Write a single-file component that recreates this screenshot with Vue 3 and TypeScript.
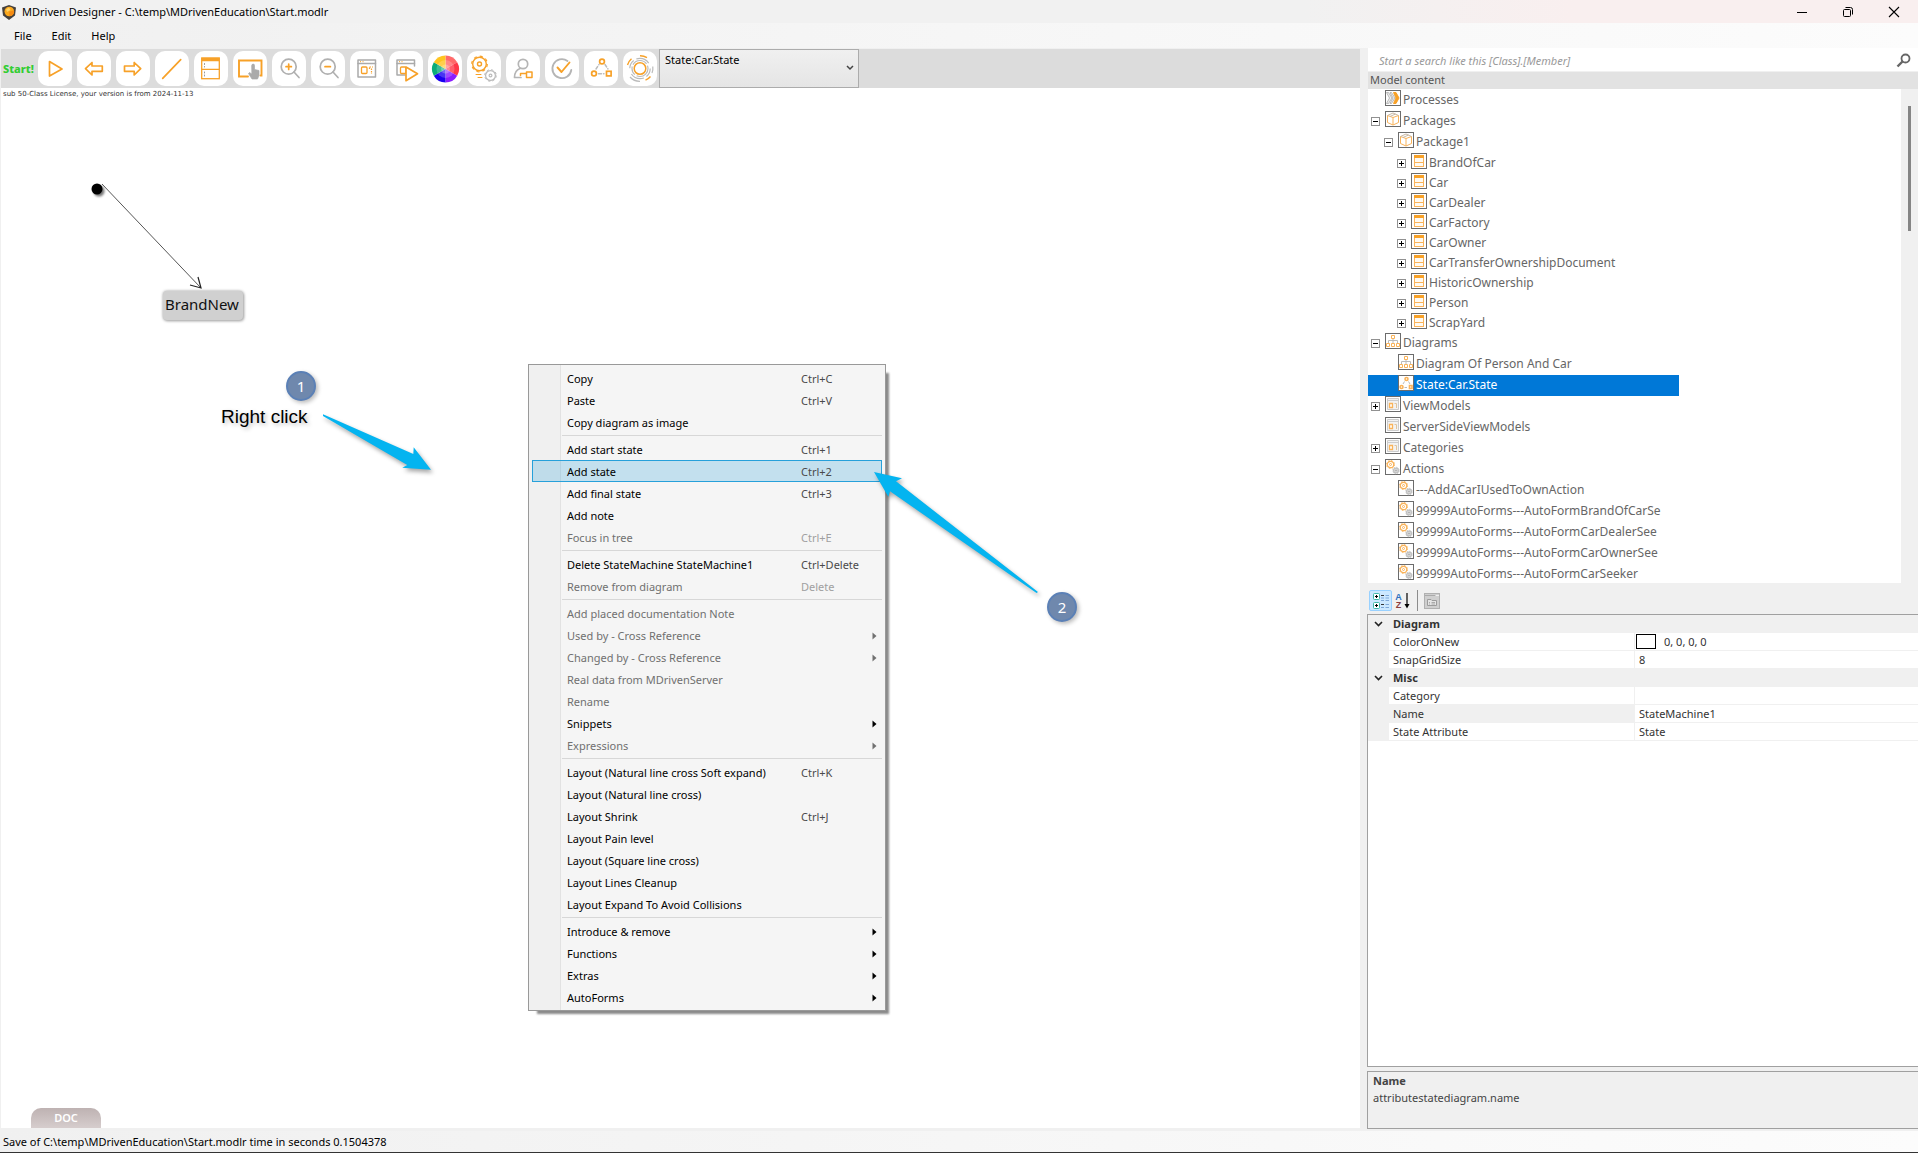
<script setup lang="ts">
import { ref } from 'vue'

interface TreeRow {
  label: string
  level: number
  icon: string
  expander?: '+' | '-'
  compact?: boolean
  selected?: boolean
}

interface MenuEntry {
  label?: string
  keys?: string
  disabled?: boolean
  submenu?: boolean
  active?: boolean
  separator?: boolean
}

interface PropertyRow {
  name: string
  value: string
  swatch?: boolean
  current?: boolean
}

interface PropertyGroup {
  title: string
  rows: PropertyRow[]
}

const search = ref('')
const diagram = ref('State:Car.State')

const tools: string[] = [
  'run', 'back', 'forward', 'line', 'class', 'place', 'zoomin', 'zoomout',
  'view', 'viewrun', 'colors', 'actions', 'access', 'check', 'states', 'rings',
]

const classNames: string[] = [
  'BrandOfCar', 'Car', 'CarDealer', 'CarFactory', 'CarOwner',
  'CarTransferOwnershipDocument', 'HistoricOwnership', 'Person', 'ScrapYard',
]

const tree: TreeRow[] = [
  { label: 'Processes', level: 0, icon: 'process' },
  { label: 'Packages', level: 0, icon: 'package', expander: '-' },
  { label: 'Package1', level: 1, icon: 'package', expander: '-' },
  ...classNames.map((label): TreeRow => ({ label, level: 2, icon: 'class', expander: '+', compact: true })),
  { label: 'Diagrams', level: 0, icon: 'diagram', expander: '-' },
  { label: 'Diagram Of Person And Car', level: 1, icon: 'diagram' },
  { label: 'State:Car.State', level: 1, icon: 'state', selected: true },
  { label: 'ViewModels', level: 0, icon: 'view', expander: '+' },
  { label: 'ServerSideViewModels', level: 0, icon: 'view' },
  { label: 'Categories', level: 0, icon: 'view', expander: '+' },
  { label: 'Actions', level: 0, icon: 'action', expander: '-' },
  { label: '---AddACarIUsedToOwnAction', level: 1, icon: 'action' },
  { label: '99999AutoForms---AutoFormBrandOfCarSe', level: 1, icon: 'action' },
  { label: '99999AutoForms---AutoFormCarDealerSee', level: 1, icon: 'action' },
  { label: '99999AutoForms---AutoFormCarOwnerSee', level: 1, icon: 'action' },
  { label: '99999AutoForms---AutoFormCarSeeker', level: 1, icon: 'action' },
]

const menu: MenuEntry[] = [
  { label: 'Copy', keys: 'Ctrl+C' },
  { label: 'Paste', keys: 'Ctrl+V' },
  { label: 'Copy diagram as image' },
  { separator: true },
  { label: 'Add start state', keys: 'Ctrl+1' },
  { label: 'Add state', keys: 'Ctrl+2', active: true },
  { label: 'Add final state', keys: 'Ctrl+3' },
  { label: 'Add note' },
  { label: 'Focus in tree', keys: 'Ctrl+E', disabled: true },
  { separator: true },
  { label: 'Delete StateMachine StateMachine1', keys: 'Ctrl+Delete' },
  { label: 'Remove from diagram', keys: 'Delete', disabled: true },
  { separator: true },
  { label: 'Add placed documentation Note', disabled: true },
  { label: 'Used by - Cross Reference', disabled: true, submenu: true },
  { label: 'Changed by - Cross Reference', disabled: true, submenu: true },
  { label: 'Real data from MDrivenServer', disabled: true },
  { label: 'Rename', disabled: true },
  { label: 'Snippets', submenu: true },
  { label: 'Expressions', disabled: true, submenu: true },
  { separator: true },
  { label: 'Layout (Natural line cross Soft expand)', keys: 'Ctrl+K' },
  { label: 'Layout (Natural line cross)' },
  { label: 'Layout Shrink', keys: 'Ctrl+J' },
  { label: 'Layout Pain level' },
  { label: 'Layout (Square line cross)' },
  { label: 'Layout Lines Cleanup' },
  { label: 'Layout Expand To Avoid Collisions' },
  { separator: true },
  { label: 'Introduce & remove', submenu: true },
  { label: 'Functions', submenu: true },
  { label: 'Extras', submenu: true },
  { label: 'AutoForms', submenu: true },
]

const groups: PropertyGroup[] = [
  {
    title: 'Diagram',
    rows: [
      { name: 'ColorOnNew', value: '0, 0, 0, 0', swatch: true },
      { name: 'SnapGridSize', value: '8' },
    ],
  },
  {
    title: 'Misc',
    rows: [
      { name: 'Category', value: '' },
      { name: 'Name', value: 'StateMachine1', current: true },
      { name: 'State Attribute', value: 'State' },
    ],
  },
]
</script>

<template>
  <div class="window">
    <header class="titlebar">
      <svg class="logo" width="16" height="16" viewBox="0 0 16 16" aria-hidden="true">
        <path d="M1 3.500 8 1 15 3.500 14 11.500 8 16 2 11.500Z" fill="#45403c" />
        <circle cx="8.300" cy="7.500" r="4.800" fill="#fba81c" />
        <path d="M8.300 7.500 13 6.500A4.800 4.800 0 0 1 8.300 12.300Z" fill="#f58a12" />
        <path d="M5 5.500 8 3.500 9.500 6 6 8Z" fill="#ffd264" />
      </svg>
      <h1 class="title">MDriven Designer - C:\temp\MDrivenEducation\Start.modlr</h1>
      <div class="caption">
        <button type="button" aria-label="Minimize">
          <svg width="12" height="12" viewBox="0 0 12 12"><path d="M1 6.500H11" stroke="#000" /></svg>
        </button>
        <button type="button" aria-label="Restore">
          <svg width="12" height="12" viewBox="0 0 12 12" fill="none" stroke="#000">
            <rect x="1.500" y="3.500" width="7" height="7" rx="1" />
            <path d="M3.500 1.500H8.500Q10.500 1.500 10.500 3.500V8.500" />
          </svg>
        </button>
        <button type="button" aria-label="Close">
          <svg width="12" height="12" viewBox="0 0 12 12"><path d="M1 1 11 11M11 1 1 11" stroke="#000" stroke-width="1.100" /></svg>
        </button>
      </div>
    </header>

    <nav class="menubar">
      <button type="button">File</button>
      <button type="button">Edit</button>
      <button type="button">Help</button>
    </nav>

    <div class="body">
      <main class="work">
        <div class="toolbar">
          <button type="button" class="start">Start!</button>
          <button v-for="t in tools" :key="t" type="button" class="tool" :aria-label="t">
            <svg width="34" height="35" viewBox="0 0 34 35" fill="none" stroke="#f7a128" stroke-width="1.700" stroke-linejoin="round" stroke-linecap="round">
              <path v-if="t === 'run'" d="M11.500 10.500 24 18 11.500 25Z" />
              <path v-else-if="t === 'back'" d="M8.500 17.700 15 11.500V15H25.300V20.300H15V24Z" />
              <path v-else-if="t === 'forward'" d="M24.700 17.700 18.200 11.500V15H8.500V20.300H18.200V24Z" />
              <path v-else-if="t === 'line'" d="M7.700 27.300 25.700 8.700" />
              <g v-else-if="t === 'class'">
                <rect x="7.700" y="7" width="17.600" height="20.700" stroke-linejoin="miter" stroke-width="1.300" />
                <path d="M7.700 8.500H25.300" stroke-width="3.500" stroke-linecap="butt" />
                <path d="M7.700 18.300H25.300" stroke-width="1.300" />
                <path d="M10.500 12.500V16M10.500 21V25" stroke="#999" stroke-width="1" stroke-dasharray="1 2" />
              </g>
              <g v-else-if="t === 'place'">
                <path d="M15 25.500H6V9.500H28.500V24.500H27.500" stroke-linejoin="miter" stroke-width="1.900" />
                <path d="M18.700 14.500a1.400 1.400 0 0 1 2.800 0V18.500L26 19.500V24.500L24.500 28H19L15.500 22.500 16.500 21.500 18.700 23Z" fill="#aaa" stroke="#aaa" stroke-width="0.700" />
              </g>
              <g v-else-if="t === 'zoomin' || t === 'zoomout'">
                <circle cx="16.700" cy="15.700" r="7.500" stroke="#b0b0b0" />
                <path d="M22 21 27 26.500" stroke="#b0b0b0" />
                <path :d="t === 'zoomin' ? 'M14 15.700H19.400M16.700 13V18.400' : 'M14 15.700H19.400'" />
              </g>
              <g v-else-if="t === 'view' || t === 'viewrun'">
                <path :d="t === 'view' ? 'M8 9H25.500V26H8Z' : 'M16 24H8V9H25.500V15'" stroke="#aaa" stroke-width="1.500" />
                <path d="M8 12.500H25.500" stroke="#aaa" stroke-width="1.500" />
                <path d="M10 10.700H15" stroke-width="1" stroke-dasharray="1 1.500" stroke-linecap="butt" />
                <rect x="11.500" y="16" width="5.500" height="6.500" rx="1" stroke-width="1.300" />
                <path v-if="t === 'view'" d="M19.500 16H23M19.500 16.500V18M21.500 17.500V23" stroke-width="1.200" stroke-dasharray="1.500 1" stroke-linecap="butt" />
                <path v-else d="M17 16 28.500 22.700 17 29.700Z" fill="#fff" />
              </g>
              <g v-else-if="t === 'colors'" stroke="none">
                <path d="M17.500 18V4.500A13.500 13.500 0 0 1 29.200 11.200Z" fill="#ff6a6a" />
                <path d="M17.500 18 29.200 11.200A13.500 13.500 0 0 1 29.200 24.700Z" fill="#ff3848" />
                <path d="M17.500 18 29.200 24.700A13.500 13.500 0 0 1 17.500 31.500Z" fill="#8a1cff" />
                <path d="M17.500 18V31.500A13.500 13.500 0 0 1 5.800 24.700Z" fill="#1a00f0" />
                <path d="M17.500 18 5.800 24.700A13.500 13.500 0 0 1 5.800 11.200Z" fill="#0cac78" />
                <path d="M17.500 18 5.800 11.200A13.500 13.500 0 0 1 17.500 4.500Z" fill="#ffc41e" />
                <circle cx="17.500" cy="18" r="9" fill="#fff" fill-opacity=".2" />
                <circle cx="17.500" cy="18" r="4.500" fill="#fff" fill-opacity=".25" />
              </g>
              <g v-else-if="t === 'actions'">
                <circle cx="12.500" cy="13" r="6.800" stroke-width="1.400" />
                <circle cx="12.500" cy="13" r="7.800" stroke-width="1.200" stroke-dasharray="3 3.130" stroke-linecap="butt" />
                <circle cx="12.500" cy="13" r="2" stroke-width="1.400" />
                <g stroke="#bbb">
                  <circle cx="23.500" cy="24.500" r="4.900" stroke-width="1.200" />
                  <circle cx="23.500" cy="24.500" r="5.800" stroke-width="1" stroke-dasharray="2.300 2.250" stroke-linecap="butt" />
                  <circle cx="23.500" cy="24.500" r="1.400" stroke-width="1.200" />
                </g>
                <path d="M9 23.500H14M11 26.500H15" stroke-width="1" />
              </g>
              <g v-else-if="t === 'access'">
                <circle cx="17" cy="13" r="4.700" stroke="#b5b5b5" />
                <path d="M14 17.500C10 19 8.500 22 8.500 26.500H15" stroke="#b5b5b5" />
                <path d="M14.500 22.500H20M14.500 22.500V24.500M20.500 21H26V26.500H20.500Z" stroke-width="1.500" />
              </g>
              <g v-else-if="t === 'check'">
                <path d="M22.500 10A9.500 9.500 0 1 0 26.300 19" stroke="#b5b5b5" stroke-width="1.800" />
                <path d="M12.500 16.500 16.500 21 24.500 11.500" stroke-width="1.900" />
              </g>
              <g v-else-if="t === 'states'">
                <circle cx="18" cy="10.500" r="2.400" />
                <circle cx="10" cy="22.500" r="2.400" />
                <rect x="22.500" y="20.300" width="4.600" height="4.600" stroke-linejoin="miter" />
                <path d="M12 18 15 13.500M21 13.500 24 18M14.500 22.700H20" stroke="#bbb" stroke-width="1.400" stroke-dasharray="3 2" />
              </g>
              <g v-else stroke-linecap="butt">
                <circle cx="17" cy="17.500" r="5.800" stroke-width="1.500" />
                <circle cx="17" cy="17.500" r="8" stroke="#bbb" stroke-width="1.200" stroke-dasharray="16 2 9 2" />
                <circle cx="17" cy="17.500" r="10.200" stroke="#bbb" stroke-width="1.200" stroke-dasharray="9 3 14 6" />
                <path d="M17 4.700A13 13 0 0 1 24 6.600M4.500 14A13 13 0 0 1 8.500 7.800M27.500 25.500A13 13 0 0 1 22.500 29.200" stroke-width="1.400" />
                <path d="M29.800 15.500A13 13 0 0 1 29 22M17 30.300A13 13 0 0 1 7 26" stroke="#bbb" stroke-width="1.200" />
              </g>
            </svg>
          </button>
          <div class="combo">
            <select v-model="diagram" aria-label="Diagram">
              <option>State:Car.State</option>
            </select>
            <svg class="combo-arrow" width="8" height="6" viewBox="0 0 8 6" aria-hidden="true">
              <path d="M1 1 4 4 7 1" fill="none" stroke="#444" stroke-width="1.500" />
            </svg>
          </div>
        </div>

        <section class="canvas">
          <p class="license">sub 50-Class License, your version is from 2024-11-13</p>

          <svg class="links" width="260" height="140" viewBox="0 0 260 140" aria-hidden="true">
            <circle cx="98" cy="103" r="5.500" fill="#777" class="soft" />
            <circle cx="96" cy="101" r="5.500" fill="#000" />
            <path d="M101 96 200 200" stroke="#555" stroke-width="1" fill="none" />
            <path d="M197 189 200 200 189 197" stroke="#222" stroke-width="1.200" fill="none" />
          </svg>
          <div class="state">BrandNew</div>

          <span class="badge badge-one">1</span>
          <span class="hint">Right click</span>

          <ul class="context" role="menu">
            <li v-for="(m, i) in menu" :key="i" :class="{ rule: m.separator }" role="none">
              <button v-if="!m.separator" type="button" role="menuitem" :disabled="m.disabled" :class="{ active: m.active }">
                <span class="name">{{ m.label }}</span>
                <span class="keys">{{ m.keys }}</span>
                <svg v-if="m.submenu" width="5" height="8" viewBox="0 0 5 8"><path d="M0.500 0.500 4.500 4 0.500 7.500Z" fill="currentColor" /></svg>
              </button>
            </li>
          </ul>

          <svg class="arrows" width="1100" height="560" viewBox="0 0 1100 560" aria-hidden="true">
            <g fill="#04b4f0">
              <path d="M322 326.300 412.300 366 412.700 359.300 430 381.700 401.300 379.700 406.300 377 322 328Z" />
              <path d="M873 384 901 390.300 895 393.300 1037 504 1035.500 505 889 403.300 887.300 408.700Z" />
            </g>
          </svg>
          <span class="badge badge-two">2</span>

          <button type="button" class="doc">DOC</button>
        </section>
      </main>

      <aside class="side">
        <div class="search">
          <input v-model="search" type="text" aria-label="Search" placeholder="Start a search like this [Class].[Member]" />
          <svg width="16" height="16" viewBox="0 0 16 16" aria-hidden="true">
            <circle cx="9.500" cy="6.500" r="4" fill="none" stroke="#666" stroke-width="1.800" />
            <path d="M6.500 9.500 1.500 14.500" stroke="#666" stroke-width="2.400" />
          </svg>
        </div>
        <h2 class="heading">Model content</h2>
        <div class="treebox">
          <ul class="tree">
            <li v-for="(r, i) in tree" :key="i" :class="['row', 'level' + r.level, { compact: r.compact, selected: r.selected }]">
              <button v-if="r.expander" type="button" class="expander" :aria-label="'Toggle ' + r.label">
                <svg width="9" height="9" viewBox="0 0 9 9">
                  <path :d="r.expander === '+' ? 'M2 4.500H7M4.500 2V7' : 'M2 4.500H7'" stroke="#000" />
                </svg>
              </button>
              <span v-else class="expander-gap"></span>
              <svg class="node" width="16" height="16" viewBox="0 0 16 16" fill="none" stroke="#f9b35a" aria-hidden="true">
                <rect x="0.500" y="0.500" width="15" height="15" fill="#fff" stroke="#6c6c6c" />
                <g v-if="r.icon === 'process'">
                  <path d="M1.500 2.500H3.500L7 8 3.500 13.500H1.500L4.500 8ZM5 2.500H6.500L10 8 6.500 13.500H5L8 8Z" fill="#eee" stroke="#aaa" stroke-width="0.800" />
                  <path d="M8.500 2.500H11L14 8 11 13.500H8.500L11 8Z" fill="#f7a128" stroke="#f7a128" />
                </g>
                <g v-else-if="r.icon === 'package'">
                  <path d="M2.500 4.500 8 6.500 13.500 4.500V11.500L8 14 2.500 11.500ZM8 6.500V14" />
                  <path d="M2.500 4.500 8 2 13.500 4.500M5 5.500 10.500 3" stroke="#c8b8a4" />
                </g>
                <g v-else-if="r.icon === 'class'">
                  <rect x="3.500" y="2.500" width="9" height="11" fill="#fffaf2" />
                  <path d="M3 3.500H13" stroke="#f7a128" stroke-width="3" />
                  <path d="M3.500 9.500H12.500" />
                </g>
                <g v-else-if="r.icon === 'diagram'">
                  <path d="M8 5V7.500M3.500 10V7.500H12.500V10M8 7.500V10" stroke="#bbb" />
                  <path d="M6.500 2.500H9.500V5.500H6.500ZM1.500 10.500H4.500V13.500H1.500ZM6.500 10.500H9.500V13.500H6.500ZM11.500 10.500H14.500V13.500H11.500Z" />
                </g>
                <g v-else-if="r.icon === 'state'">
                  <circle cx="8.500" cy="4" r="1.500" stroke-width="1.600" />
                  <circle cx="3.500" cy="12" r="1.500" stroke-width="1.600" />
                  <path d="M11.500 10.500H14V13.500H11.500Z" stroke-width="1.600" />
                  <path d="M5 9 6.500 6.500M10.500 6.500 12 9M6.500 12.500H9" stroke="#bbb" />
                </g>
                <g v-else-if="r.icon === 'view'">
                  <path d="M2.500 2.500H13.500V13.500H2.500Z" fill="#f2f2f2" stroke="#ccc" />
                  <path d="M2.500 4.500H13.500" stroke="#ccc" />
                  <path d="M4.500 7.500H7.500V11.500H4.500Z" fill="#fff" stroke-width="1.300" />
                  <path d="M9.500 7.500H11.500V12" stroke="#e0c49c" />
                </g>
                <g v-else>
                  <circle cx="5.500" cy="5.500" r="3.200" stroke-width="1.200" />
                  <circle cx="5.500" cy="5.500" r="4" stroke-width="1" stroke-dasharray="1.570 1.570" />
                  <circle cx="5.500" cy="5.500" r="1" />
                  <circle cx="11" cy="11.500" r="2.400" fill="#e8e8e8" stroke="#c0c0c0" stroke-width="1.200" />
                  <circle cx="11" cy="11.500" r="3.200" stroke="#c0c0c0" stroke-dasharray="1.250 1.250" />
                  <circle cx="11" cy="11.500" r="0.700" stroke="#aaa" />
                </g>
              </svg>
              <span class="label">{{ r.label }}</span>
            </li>
          </ul>
          <div class="scrollbar"><div class="thumb"></div></div>
        </div>

        <div class="propbar">
          <button type="button" class="pressed" aria-label="Categorized">
            <svg width="18" height="18" viewBox="0 0 18 18">
              <g fill="#fff" stroke="#3fb8a8"><rect x="1.500" y="1.500" width="6" height="6" rx="1" /><rect x="1.500" y="10.500" width="6" height="6" rx="1" /></g>
              <path d="M3 4.500H6M4.500 3V6M3 13.500H6M4.500 12V15" stroke="#000" />
              <path d="M9 3.500H12M9 12.500H12" stroke="#333" />
              <path d="M9 6H12M9 8.500H12M13.500 3.500H17M13.500 6H17M13.500 8.500H17M9 15.500H12M13.500 12.500H17M13.500 15.500H17" stroke="#7fa8d8" />
            </svg>
          </button>
          <button type="button" class="sort" aria-label="Alphabetical">
            <span class="az"><b class="a">A</b><b class="z">Z</b></span>
            <svg width="6" height="16" viewBox="0 0 6 16"><path d="M3 0V12" stroke="#000" stroke-width="1.200" /><path d="M0.500 11H5.500L3 15.500Z" /></svg>
          </button>
          <span class="divider"></span>
          <button type="button" class="pages" aria-label="Property Pages">
            <svg width="16" height="16" viewBox="0 0 16 16">
              <rect x="0.500" y="0.500" width="15" height="15" fill="#cfcfcf" stroke="#b0b0b0" />
              <path d="M1 2.500H11" stroke="#aaa" /><path d="M12 2.500H15" stroke="#eee" />
              <path d="M3.500 12.500V6.500H7L8 7.500H12.500V12.500Z" fill="#e4e4e4" stroke="#9c9c9c" />
              <path d="M5 9.500H6M7.500 9.500H11M5 11H6M7.500 11H11" stroke="#aaa" />
            </svg>
          </button>
        </div>

        <div class="gridbox">
          <table class="grid">
            <colgroup><col class="c-gutter" /><col class="c-name" /><col /></colgroup>
            <tbody v-for="g in groups" :key="g.title">
              <tr class="group">
                <td>
                  <svg width="9" height="6" viewBox="0 0 9 6"><path d="M1 1 4.500 4.500 8 1" fill="none" stroke="#222" stroke-width="1.600" /></svg>
                </td>
                <th colspan="2" scope="colgroup">{{ g.title }}</th>
              </tr>
              <tr v-for="p in g.rows" :key="p.name" :class="{ current: p.current }">
                <td></td>
                <th scope="row">{{ p.name }}</th>
                <td class="value">
                  <div class="cell"><span v-if="p.swatch" class="swatch"></span>{{ p.value }}</div>
                </td>
              </tr>
            </tbody>
          </table>
        </div>

        <div class="help">
          <strong>Name</strong>
          <p>attributestatediagram.name</p>
        </div>
      </aside>
    </div>

    <footer class="status">Save of C:\temp\MDrivenEducation\Start.modlr time in seconds 0.1504378</footer>
  </div>
</template>

<style>
body {
  margin: 0;
}
</style>

<style scoped>
* {
  box-sizing: border-box;
}

button {
  margin: 0;
  padding: 0;
  border: 0;
  background: none;
  font: inherit;
  color: inherit;
}

svg {
  display: block;
  flex: none;
}

.window {
  display: flex;
  flex-direction: column;
  height: 100vh;
  min-height: 1040px;
  overflow: hidden;
  background: #f0f0f0;
  color: #000;
  font: 11px/18px "Noto Sans", "Open Sans", sans-serif;
}

.titlebar {
  display: flex;
  flex: none;
  align-items: center;
  height: 23px;
  padding: 0 1px;
  background: linear-gradient(90deg, #f1f1f1 0 68%, #f9efef 82%);
}

.title {
  flex: 1;
  margin: 0 0 0 5px;
  font-size: 11px;
  font-weight: 400;
}

.caption {
  display: flex;
}

.caption button {
  display: flex;
  align-items: center;
  justify-content: center;
  width: 46px;
  height: 23px;
}

.menubar {
  display: flex;
  flex: none;
  align-items: center;
  gap: 20px;
  height: 25px;
  padding-left: 14px;
  background: linear-gradient(90deg, #f0f0f0, #fcfcfc);
}

.body {
  display: grid;
  flex: 1;
  grid-template-columns: minmax(0, 1fr) 551px;
  gap: 7px;
  min-height: 0;
}

.work {
  display: flex;
  flex-direction: column;
  min-width: 0;
  margin: 1px 0 3px 1px;
}

.toolbar {
  display: flex;
  flex: none;
  align-items: center;
  gap: 5px;
  height: 39px;
  padding-left: 2px;
  background: #dcdcdc;
}

.start {
  width: 30px;
  color: #32cd32;
  font-size: 11px;
  font-weight: 800;
  white-space: nowrap;
}

.tool {
  flex: none;
  width: 34px;
  height: 35px;
  border-radius: 10px;
  background: #fff;
}

.combo {
  position: relative;
  margin-left: -3px;
}

.combo select {
  display: block;
  width: 200px;
  height: 39px;
  padding: 0 20px 17px 5px;
  border: 1px solid #acacac;
  border-radius: 0;
  background: linear-gradient(#f0f0f0, #e5e5e5);
  appearance: none;
  color: #000;
  font: 11px/16px "Noto Sans", "Open Sans", sans-serif;
}

.combo-arrow {
  position: absolute;
  top: 16px;
  right: 5px;
}

.canvas {
  position: relative;
  flex: 1;
  background: #fff;
  overflow: hidden;
}

.license {
  margin: 0;
  padding: 0 2px;
  color: #333;
  font: 7px/12px "DejaVu Sans", sans-serif;
}

.links {
  position: absolute;
  top: 0;
  left: 0;
  overflow: visible;
}

.soft {
  filter: blur(1px);
}

.state {
  position: absolute;
  top: 203px;
  left: 162px;
  padding: 1px 4px 4px 2px;
  border-radius: 4px;
  background: #d0d0d0;
  box-shadow: 0 0 3px #aaa, 1px 1px 3px #aaa;
  color: #111;
  font-size: 15px;
  line-height: 24px;
}

.badge {
  position: absolute;
  width: 30px;
  height: 30px;
  border: 2px solid #5b80b6;
  border-radius: 50%;
  background: #6f88ad;
  box-shadow: 2px 2px 4px #bbb;
  color: #fff;
  font-size: 15px;
  line-height: 26px;
  text-align: center;
}

.badge-one {
  top: 283px;
  left: 285px;
}

.badge-two {
  top: 504px;
  left: 1046px;
}

.hint {
  position: absolute;
  top: 318px;
  left: 220px;
  font: 19px/22px "Liberation Sans", sans-serif;
  text-shadow: 2px 2px 4px #bbb;
}

.context {
  position: absolute;
  top: 276px;
  left: 527px;
  width: 358px;
  margin: 0;
  padding: 2px 3px;
  border: 1px solid #999;
  background: linear-gradient(90deg, #f0f0f0 31px, #e2e2e2 31px 32px, #f5f5f5 32px);
  box-shadow: 6px 6px 2px -3px #8a8a8a;
  font-size: 11px;
  list-style: none;
}

.context button {
  display: flex;
  align-items: center;
  width: 100%;
  height: 22px;
  padding: 2px 4px 0 34px;
  border: 1px solid transparent;
  text-align: left;
}

.context button.active {
  border-color: #26a0da;
  background: rgba(38, 160, 218, 0.24);
}

.context .name {
  width: 234px;
}

.context .keys {
  flex: 1;
  color: #4a4a4a;
}

.context button:disabled {
  color: #707070;
}

.context button:disabled .keys {
  color: #a0a0a0;
}

.rule {
  height: 5px;
  padding: 2px 0 0 30px;
}

.rule::before {
  display: block;
  height: 1px;
  background: #d7d7d7;
  content: "";
}

.arrows {
  position: absolute;
  top: 0;
  left: 0;
  filter: drop-shadow(2px 3px 2px rgba(0, 0, 0, 0.35));
  pointer-events: none;
}

.doc {
  position: absolute;
  bottom: 0;
  left: 30px;
  width: 70px;
  height: 20px;
  border-radius: 10px 10px 0 0;
  background: linear-gradient(#beb2b2, #d6cdcd);
  color: #fff;
  font-weight: 600;
}

.side {
  display: flex;
  flex-direction: column;
  min-height: 0;
}

.search {
  display: flex;
  flex: none;
  align-items: center;
  height: 23px;
  margin-left: 1px;
  padding-right: 6px;
  background: #fff;
}

.search input {
  flex: 1;
  min-width: 0;
  padding: 3px 0 0 11px;
  border: 0;
  outline: 0;
  background: none;
  color: #333;
  font: italic 11px/18px "Noto Sans", "Open Sans", sans-serif;
}

.search input::placeholder {
  color: #999;
  opacity: 1;
}

.heading {
  flex: none;
  height: 17px;
  margin: 1px 0 0 1px;
  padding-left: 2px;
  background: #e2e2e2;
  color: #555;
  font-size: 11px;
  font-weight: 400;
  line-height: 16px;
}

.treebox {
  display: flex;
  flex: none;
  height: 494px;
  margin-left: 1px;
  background: #fff;
  overflow: hidden;
}

.tree {
  flex: 1;
  margin: 0;
  padding: 1px 0 0;
  font-size: 12px;
  list-style: none;
}

.row {
  display: flex;
  align-items: flex-start;
  width: 311px;
  height: 21px;
  padding-left: 3px;
  color: #666;
  white-space: nowrap;
}

.row.compact {
  height: 20px;
}

.row.level1 {
  padding-left: 16px;
}

.row.level2 {
  padding-left: 29px;
}

.row.selected {
  background: #0078d7;
  color: #fff;
}

.expander,
.expander-gap {
  flex: none;
  width: 9px;
  height: 9px;
  margin: 6px 5px 0 0;
}

.expander {
  outline: 1px solid #919191;
  outline-offset: -1px;
  background: #fff;
}

.label {
  margin-left: 2px;
  line-height: 19px;
}

.scrollbar {
  width: 17px;
  padding: 17px 7px;
  background: #f0f0f0;
}

.thumb {
  width: 3px;
  height: 125px;
  background: #858585;
}

.propbar {
  display: flex;
  flex: none;
  align-items: center;
  height: 31px;
  padding: 4px 0 0 2px;
}

.pressed {
  display: flex;
  align-items: center;
  justify-content: center;
  width: 23px;
  height: 21px;
  border: 1px solid #99d1ff;
  border-radius: 2px;
  background: #cce8ff;
}

.sort {
  display: flex;
  gap: 2px;
  align-items: center;
  margin-left: 3px;
}

.az {
  display: grid;
  width: 7px;
  font: 9px/8px "Liberation Sans", sans-serif;
}

.a {
  color: #2b6fc0;
}

.z {
  color: #8a3f3f;
}

.divider {
  width: 1px;
  height: 21px;
  margin: 0 6px 0 7px;
  background: #8c8c8c;
}

.gridbox {
  flex: 1;
  min-height: 0;
  border: solid #a0a0a0;
  border-width: 1px 0 1px 1px;
  background: #fff;
  overflow: hidden;
}

.grid {
  width: 100%;
  border-collapse: separate;
  border-spacing: 0;
  table-layout: fixed;
  color: #333;
  font-size: 11px;
  line-height: 17px;
}

.c-gutter {
  width: 21px;
}

.c-name {
  width: 245px;
}

.grid th,
.grid td {
  height: 18px;
  padding: 0 4px;
  border-bottom: 1px solid #f0f0f0;
  font-weight: 400;
  text-align: left;
}

.grid tr > td:first-child,
.grid .group th,
.grid .current th {
  background: #f0f0f0;
}

.grid tr > td:first-child {
  padding-left: 6px;
}

.grid .group th {
  font-weight: 700;
}

.grid .value {
  border-left: 1px solid #f0f0f0;
}

.cell {
  display: flex;
  align-items: center;
  height: 17px;
}

.swatch {
  width: 20px;
  height: 15px;
  margin: 0 8px 0 -3px;
  border: 1px solid #000;
}

.help {
  flex: none;
  height: 58px;
  margin: 4px 0 2px;
  padding: 0 5px;
  border: solid #a0a0a0;
  border-width: 1px 0 1px 1px;
  color: #444;
  font-size: 11px;
  line-height: 17px;
}

.help p {
  margin: 0;
}

.status {
  flex: none;
  height: 22px;
  padding-left: 3px;
  border-bottom: 1px solid #333;
  background: linear-gradient(90deg, #f0f0f0, #fcfcfc);
  line-height: 22px;
}
</style>
